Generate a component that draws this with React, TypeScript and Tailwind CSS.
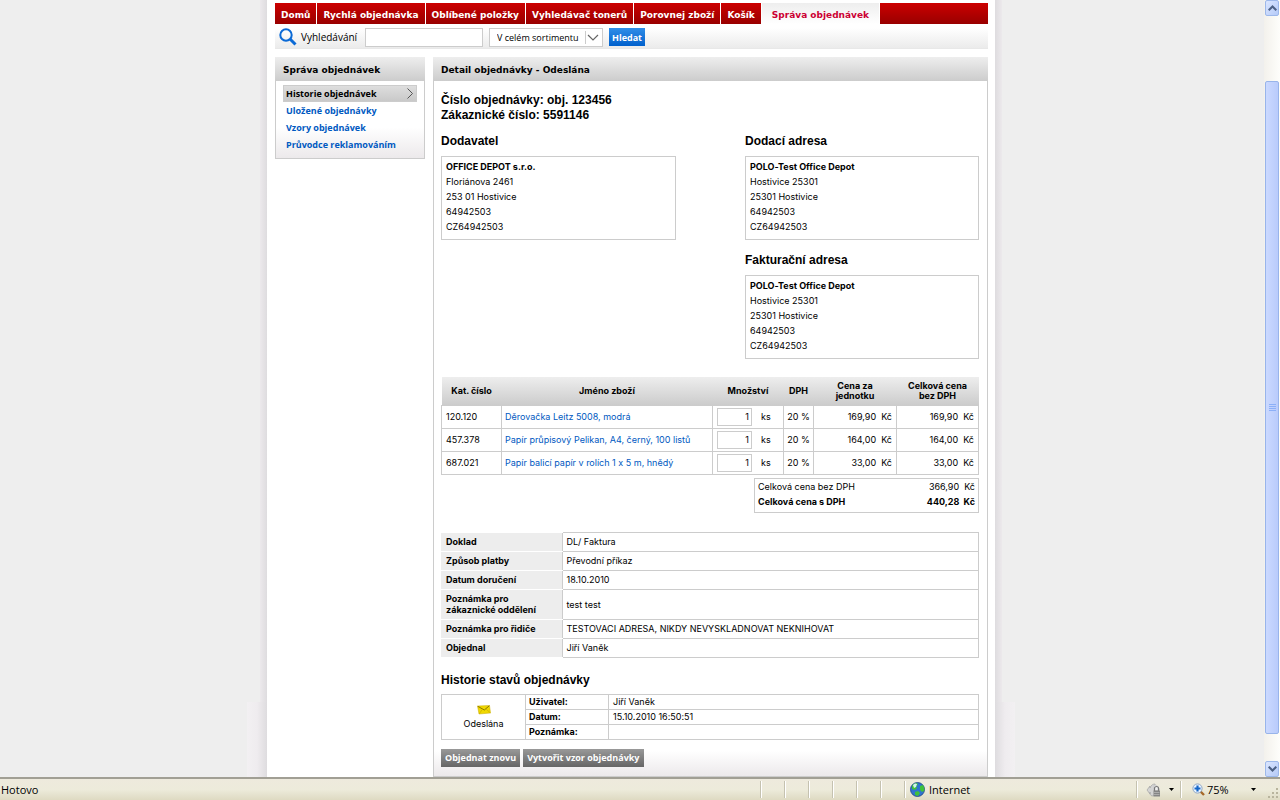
import React from 'react';
import clsx from 'clsx';

const navItems = [
  'Domů',
  'Rychlá objednávka',
  'Oblíbené položky',
  'Vyhledávač tonerů',
  'Porovnej zboží',
  'Košík',
  'Správa objednávek'
];

const sideItems = ['Historie objednávek', 'Uložené objednávky', 'Vzory objednávek', 'Průvodce reklamováním'];

const supplier = ['OFFICE DEPOT s.r.o.', 'Floriánova 2461', '253 01 Hostivice', '64942503', 'CZ64942503'];
const customer = ['POLO-Test Office Depot', 'Hostivice 25301', '25301 Hostivice', '64942503', 'CZ64942503'];

const products = [
  { code: '120.120', name: 'Děrovačka Leitz 5008, modrá', qty: 1, price: '169,90' },
  { code: '457.378', name: 'Papír průpisový Pelikan, A4, černý, 100 listů', qty: 1, price: '164,00' },
  { code: '687.021', name: 'Papír balicí papír v rolích 1 x 5 m, hnědý', qty: 1, price: '33,00' }
];

const details = [
  ['Doklad', 'DL/ Faktura'],
  ['Způsob platby', 'Převodní příkaz'],
  ['Datum doručení', '18.10.2010'],
  ['Poznámka pro zákaznické oddělení', 'test test'],
  ['Poznámka pro řidiče', 'TESTOVACI ADRESA, NIKDY NEVYSKLADNOVAT NEKNIHOVAT'],
  ['Objednal', 'Jiří Vaněk']
];

const history = [
  ['Uživatel:', 'Jiří Vaněk'],
  ['Datum:', '15.10.2010 16:50:51'],
  ['Poznámka:', '']
];

function Heading({ children, className }: { children: React.ReactNode; className?: string }) {
  return (
    <h2 className={clsx("font-['Liberation_Sans',sans-serif] text-xs leading-[15px] font-bold", className)}>
      {children}
    </h2>
  );
}

function AddressBox({ lines }: { lines: string[] }) {
  return (
    <address className="border border-[#ccc] px-1 pt-[2px] pb-[5px] leading-[15px] not-italic">
      {lines.map((line, i) => (
        <div key={line} className={clsx(i === 0 && 'font-bold')}>
          {line}
        </div>
      ))}
    </address>
  );
}

function Nav() {
  return (
    <nav className="flex h-[21px] bg-linear-to-b from-[#cc0000] to-[#990000] font-['DejaVu_Sans',sans-serif] leading-6 font-bold">
      {navItems.map((item, i) => (
        <a
          key={item}
          href="#"
          className={clsx(
            'border-r border-white whitespace-nowrap',
            i === navItems.length - 1
              ? 'bg-linear-to-b from-[#eee] to-white px-[10px] text-[#cc0033]'
              : 'px-[6px] text-white'
          )}
        >
          {item}
        </a>
      ))}
    </nav>
  );
}

function SearchBar() {
  return (
    <form className="mt-1 flex h-[21px] items-start border-b border-[#e8e8e8] bg-linear-to-b from-white to-[#ebebeb] font-['Open_Sans',sans-serif]">
      <svg className="mx-1 h-[18px] w-[18px]" viewBox="0 0 18 18" fill="none" stroke="#0b6ad6">
        <circle cx="7" cy="7" r="5.7" strokeWidth="2" />
        <path d="M11 11l5.5 5.5" strokeWidth="3" />
      </svg>
      <label htmlFor="search" className="w-16 text-[10px] leading-[19px]">
        Vyhledávání
      </label>
      <input id="search" type="text" className="h-[19px] w-[118px] border border-[#ccc] bg-white px-1 outline-none" />
      <div className="relative ml-[6px]">
        <select
          aria-label="Sortiment"
          className="h-[19px] w-[114px] appearance-none border border-[#ccc] bg-white pl-[7px] leading-none outline-none"
        >
          <option>V celém sortimentu</option>
        </select>
        <svg
          className="pointer-events-none absolute top-[3px] right-[2px] h-[13px] w-4"
          viewBox="0 0 16 13"
          fill="none"
          stroke="#666"
        >
          <path d="M0.5 0v13" stroke="#ccc" />
          <path d="M3 4l5 5 5-5" strokeWidth="1.2" />
        </svg>
      </div>
      <button
        type="button"
        className="ml-[6px] h-[18px] w-9 bg-linear-to-b from-[#2f8ee8] to-[#0060cc] font-bold text-white"
      >
        Hledat
      </button>
    </form>
  );
}

function PanelTitle({ children }: { children: React.ReactNode }) {
  return (
    <h3 className="h-6 bg-linear-to-b from-[#eee] to-[#ccc] px-2 font-['DejaVu_Sans',sans-serif] leading-[26px] font-bold">
      {children}
    </h3>
  );
}

function Sidebar() {
  return (
    <aside className="w-[150px] shrink-0">
      <PanelTitle>Správa objednávek</PanelTitle>
      <ul className="border border-t-0 border-[#ccc] bg-linear-to-b from-white from-60% to-[#ece9eb] px-[7px] pt-1 pb-[5px] font-['Open_Sans',sans-serif] leading-[17px] font-bold">
        {sideItems.map((item, i) => (
          <li key={item}>
            <a
              href="#"
              className={clsx(
                'flex items-center justify-between',
                i === 0
                  ? 'border border-[#ccc] bg-linear-to-b from-[#dedede] to-[#c9c9c9] px-[2px] leading-[15px]'
                  : 'px-[3px] text-[#0059c1]'
              )}
            >
              {item}
              {i === 0 && (
                <svg className="h-[11px] w-2" viewBox="0 0 8 11" fill="none" stroke="#555">
                  <path d="M1.5 0.5l5 5-5 5" />
                </svg>
              )}
            </a>
          </li>
        ))}
      </ul>
    </aside>
  );
}

function ProductTable() {
  return (
    <table className="mt-[18px] w-full table-fixed border-collapse">
      <colgroup>
        <col className="w-[60px]" />
        <col />
        <col className="w-[71px]" />
        <col className="w-[30px]" />
        <col className="w-[83px]" />
        <col className="w-[82px]" />
      </colgroup>
      <thead>
        <tr className="h-7 bg-linear-to-b from-[#eee] to-[#ccc] leading-[10px]">
          <th>Kat. číslo</th>
          <th>Jméno zboží</th>
          <th>Množství</th>
          <th>DPH</th>
          <th className="px-4">Cena za jednotku</th>
          <th className="px-2">Celková cena bez DPH</th>
        </tr>
      </thead>
      <tbody>
        {products.map((p) => (
          <tr key={p.code} className="h-[23px]">
            <td className="border border-[#ccc] pl-1">{p.code}</td>
            <td className="border border-[#ccc] pl-[3px]">
              <a href="#" className="text-[#0059c1]">
                {p.name}
              </a>
            </td>
            <td className="border border-[#ccc]">
              <div className="flex items-center pl-1">
                <input
                  type="text"
                  aria-label={`Množství ${p.code}`}
                  defaultValue={p.qty}
                  className="h-[18px] w-[35px] border border-[#ccc] pr-[2px] text-right outline-none"
                />
                <span className="ml-[9px]">ks</span>
              </div>
            </td>
            <td className="border border-[#ccc] text-center">20 %</td>
            <td className="border border-[#ccc] pr-1 text-right whitespace-pre">{p.price}{'  '}Kč</td>
            <td className="border border-[#ccc] pr-1 text-right whitespace-pre">{p.price}{'  '}Kč</td>
          </tr>
        ))}
      </tbody>
    </table>
  );
}

function Totals() {
  return (
    <dl className="mt-[3px] ml-auto w-[225px] border border-[#ccc] px-[3px] pb-[3px] leading-[15px]">
      <div className="flex justify-between whitespace-pre">
        <dt>Celková cena bez DPH</dt>
        <dd>366,90{'  '}Kč</dd>
      </div>
      <div className="flex justify-between font-bold whitespace-pre">
        <dt>Celková cena s DPH</dt>
        <dd>440,28{'  '}Kč</dd>
      </div>
    </dl>
  );
}

function DetailTable() {
  return (
    <table className="mt-[19px] w-full border-collapse leading-[11px]">
      <tbody>
        {details.map(([label, value]) => (
          <tr key={label} className="h-[19px]">
            <th className="w-[121px] border-y border-white bg-[#ededed] pt-[3px] pb-1 pr-4 pl-[5px] text-left">{label}</th>
            <td className="border border-[#ccc] pl-1">{value}</td>
          </tr>
        ))}
      </tbody>
    </table>
  );
}

function HistoryTable() {
  return (
    <table className="mt-[6px] w-full border-collapse leading-[13px]">
      <tbody>
        {history.map(([label, value], i) => (
          <tr key={label} className="h-[15px]">
            {i === 0 && (
              <td rowSpan={3} className="w-[84px] border border-[#ccc] pt-[2px] text-center">
                <svg className="mx-auto mb-[2px] h-[10px] w-[14px]" viewBox="0 0 14 10">
                  <path d="M0.5 1l12-0.5 1 7.5-11.5 1z" fill="#f0d800" stroke="#c8ab00" strokeWidth="0.5" />
                  <path d="M0.8 1.3l6.5 3.7 5-4.2" fill="none" stroke="#7d6a00" strokeWidth="0.9" />
                  <path d="M2.3 8.7l3-4.3M13.2 7.8l-4-3.7" fill="none" stroke="#c8ab00" strokeWidth="0.7" />
                </svg>
                Odeslána
              </td>
            )}
            <th className="w-[83px] border border-[#ccc] pl-[3px] text-left">{label}</th>
            <td className="border border-[#ccc] pl-1">{value}</td>
          </tr>
        ))}
      </tbody>
    </table>
  );
}

function OrderDetail() {
  return (
    <main className="flex min-w-0 flex-1 flex-col">
      <PanelTitle>Detail objednávky - Odeslána</PanelTitle>
      <div className="border border-t-0 border-[#ccc]">
        <div className="pt-3 pr-2 pl-[7px]">
          <Heading>Číslo objednávky: obj. 123456</Heading>
          <Heading>Zákaznické číslo: 5591146</Heading>
          <div className="mt-[11px] flex justify-between">
            <section className="w-[235px]">
              <Heading className="mb-[7px]">Dodavatel</Heading>
              <AddressBox lines={supplier} />
            </section>
            <section className="w-[234px]">
              <Heading className="mb-[7px]">Dodací adresa</Heading>
              <AddressBox lines={customer} />
              <Heading className="mt-[13px] mb-[7px]">Fakturační adresa</Heading>
              <AddressBox lines={customer} />
            </section>
          </div>
          <ProductTable />
          <Totals />
          <DetailTable />
          <Heading className="mt-[15px]">Historie stavů objednávky</Heading>
          <HistoryTable />
        </div>
        <div className="flex gap-[3px] bg-linear-to-b from-white from-30% to-[#ece9eb] px-[7px] py-[9px] font-['Open_Sans',sans-serif]">
          {['Objednat znovu', 'Vytvořit vzor objednávky'].map((label) => (
            <button
              key={label}
              type="button"
              className="h-[18px] bg-linear-to-b from-[#999] to-[#666] px-1 font-bold whitespace-nowrap text-white"
            >
              {label}
            </button>
          ))}
        </div>
      </div>
    </main>
  );
}

// Page shadow beside the white column, wider at the foot
function EdgeShadow({ side }: { side: 'left' | 'right' }) {
  return (
    <div className={clsx('flex w-5 shrink-0 flex-col', side === 'right' && '-scale-x-100')}>
      <div className="ml-auto w-[7px] flex-1 bg-linear-to-r from-[#ece9ec] to-[#dedcdf]" />
      <div className="h-[75px] bg-linear-to-r from-[#f2f0f2] via-[#efecef] to-[#dedcdf]" />
    </div>
  );
}

function ScrollButton({ down }: { down?: boolean }) {
  return (
    <button
      type="button"
      aria-label={down ? 'Dolů' : 'Nahoru'}
      className="mx-px flex h-4 shrink-0 items-center justify-center rounded-xs border border-[#9db8ea] bg-linear-to-br from-[#dbe6ff] to-[#b5caf8]"
    >
      <svg className="h-[6px] w-[9px]" viewBox="0 0 9 6" fill="none" stroke="#4d6185" strokeWidth="2">
        <path d={down ? 'M0.7 0.7l3.8 3.8 3.8-3.8' : 'M0.7 5.3l3.8-3.8 3.8 3.8'} />
      </svg>
    </button>
  );
}

function Scrollbar() {
  return (
    <div className="flex w-4 shrink-0 flex-col bg-linear-to-r from-[#f3f1ec] to-[#fefefb]">
      <ScrollButton />
      <div className="flex flex-1 flex-col pt-[65px] pb-[27px]">
        <div className="mx-px flex flex-1 flex-col items-center justify-center gap-px rounded-xs border border-[#98b4ea] bg-linear-to-r from-[#cbd9ff] to-[#b9cbfb]">
          {[0, 1, 2, 3].map((i) => (
            <span key={i} className="h-px w-[7px] border-t border-[#8cb0f8]" />
          ))}
        </div>
      </div>
      <ScrollButton down />
    </div>
  );
}

function Divider() {
  return <span className="h-[17px] w-[2px] border-l border-[#c5c2b0] bg-white" />;
}

function Caret() {
  return (
    <svg className="h-[3px] w-[5px]" viewBox="0 0 5 3">
      <path d="M0 0h5L2.5 3z" />
    </svg>
  );
}

function StatusBar() {
  return (
    <footer className="flex h-[23px] shrink-0 items-center border-t-2 border-[#a19f94] bg-linear-to-b from-[#eeeadd] via-[#edebdb] to-[#dedac2] font-['Open_Sans',sans-serif] text-[11px]">
      <span className="flex-1 pl-px">Hotovo</span>
      <div className="flex gap-[22px]">
        {[0, 1, 2, 3, 4, 5, 6].map((i) => (
          <Divider key={i} />
        ))}
      </div>
      <div className="flex w-[230px] items-center gap-1 pl-1">
        <svg className="h-[15px] w-[15px]" viewBox="0 0 15 15">
          <circle cx="7.5" cy="7.5" r="7" fill="#2f74d0" stroke="#1c4480" strokeWidth="0.8" />
          <path
            d="M2 4c1-2 3-3 5-3l1 2-2 1 1 2-2 2-3-1zM10 4l3-1c1 2 2 4 1 6l-2 1-2-2zM5 10l3-1 2 2-2 3-3-1z"
            fill="#3fc13a"
          />
          <path d="M3 3l2-1.5 2 0.5-1 3-2 1z" fill="#d4f4ee" />
        </svg>
        Internet
      </div>
      <Divider />
      <div className="flex w-[42px] items-center gap-2 pl-2">
        <svg className="h-[14px] w-[15px]" viewBox="0 0 15 14">
          <path d="M1 7l3-4v2c1-3 3-4 5-4l1 11-4 1c-2-1-2-2-2-4v2z" fill="#d4d4d4" stroke="#aaa" strokeWidth="0.8" />
          <path d="M8 2c3 0 5 2 5.5 5l-5 1z" fill="#eee" stroke="#bbb" strokeWidth="0.6" />
          <path d="M8.5 8V5.5a2 2 0 014 0V8" fill="none" stroke="#777" strokeWidth="1.2" />
          <rect x="7.5" y="7.5" width="6.5" height="6" fill="#858585" />
          <path d="M8 9.5h5.5M8 11.5h5.5" stroke="#bbb" strokeWidth="0.7" />
        </svg>
        <Caret />
      </div>
      <Divider />
      <div className="flex w-[86px] items-center pl-[10px]">
        <svg className="mr-[2px] h-[13px] w-[13px]" viewBox="0 0 13 13" fill="none">
          <path d="M8.5 8.5l3.5 3.5" stroke="#a6682a" strokeWidth="2.4" />
          <circle cx="5.5" cy="5.5" r="4.6" fill="#e8f3ff" stroke="#8fa6c4" />
          <path d="M5.5 2.5v6M2.5 5.5h6" stroke="#1566c8" strokeWidth="2.2" />
        </svg>
        <span className="flex-1">75%</span>
        <span className="pr-3">
          <Caret />
        </span>
      </div>
      <svg className="mt-auto h-3 w-3" viewBox="0 0 12 12" fill="#b8b49d">
        <path d="M8 0h2v2H8zM4 4h2v2H4zM8 4h2v2H8zM0 8h2v2H0zM4 8h2v2H4zM8 8h2v2H8z" />
      </svg>
    </footer>
  );
}

export default function App() {
  return (
    <div className="flex h-screen flex-col overflow-hidden font-['Inter','Liberation_Sans',sans-serif] text-[9px] leading-[15px] text-black [font-feature-settings:'calt'_0]">
      <div className="flex min-h-0 flex-1">
        <div className="flex min-w-0 flex-1 justify-center overflow-hidden bg-[#eee] pr-[2px]">
          <EdgeShadow side="left" />
          <div className="w-full max-w-[728px] bg-white pt-[3px] pr-[7px] pl-2">
            <Nav />
            <SearchBar />
            <div className="mt-2 flex items-start gap-2">
              <Sidebar />
              <OrderDetail />
            </div>
          </div>
          <EdgeShadow side="right" />
        </div>
        <Scrollbar />
      </div>
      <StatusBar />
    </div>
  );
}
